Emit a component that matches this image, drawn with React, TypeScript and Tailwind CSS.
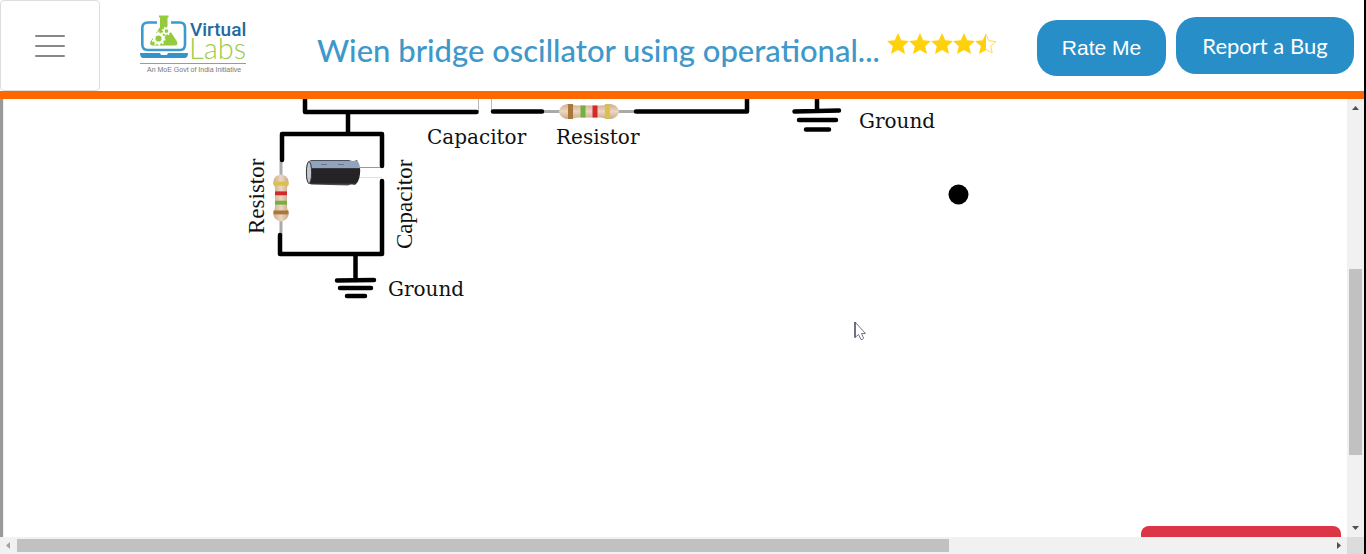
import React from "react";

function Logo() {
  return (
    <svg viewBox="138 12 112 64" className="h-16 w-28" role="img" aria-label="Virtual Labs">
      <path
        d="M157 22.5H148Q142.300 22.500 142.300 28V44.500Q142.300 50 148 50H180Q185 50 185 44.500V28Q185 22.500 180 22.500H171"
        fill="none"
        stroke="#3a9bce"
        strokeWidth="2.600"
      />
      <path d="M140 53H160L161 55H167L168 53H188Q188 58 184.500 58H143.500Q140 58 140 53Z" fill="#3593cb" />
      <path
        d="M159 15.500H168.500V17.500H167.500V27L177 41.500Q178.500 45.500 174.500 45.500H153Q149 45.500 150.500 41.500L160 27V17.500H159Z"
        fill="#93cb3d"
      />
      <circle cx="158.500" cy="38.500" r="4.400" fill="none" stroke="#fff" strokeWidth="2.600" />
      <circle cx="158.500" cy="38.500" r="6.200" fill="none" stroke="#fff" strokeWidth="1.600" strokeDasharray="2 1.900" />
      <circle cx="166.500" cy="31" r="2.700" fill="none" stroke="#fff" strokeWidth="1.700" />
      <circle cx="166.500" cy="31" r="3.900" fill="none" stroke="#fff" strokeWidth="1.200" strokeDasharray="1.500 1.560" />
      <text x="190" y="36" fontSize="19" className="fill-[#23699f] font-['Roboto',sans-serif] font-medium">
        Virtual
      </text>
      <text x="189" y="59" fontSize="29" className="fill-[#9ccc4c] font-['Lato',sans-serif] font-light">
        Labs
      </text>
      <path d="M140 63.500H246" stroke="#9a9a9a" />
      <text x="147" y="72" fontSize="7" className="fill-[#777] font-['Liberation_Sans',sans-serif]">
        An MoE Govt of India Initiative
      </text>
    </svg>
  );
}

const STAR = "M11 0L14.200 7.200L22 8.100L16.200 13.300L18 21L11 17L4 21L5.800 13.300L0 8.100L7.800 7.200Z";

function Star({ half = false }: { half?: boolean }) {
  return (
    <svg viewBox="0 0 22 22" className="size-[22px]" aria-hidden="true">
      {half ? (
        <>
          <path d="M11 0V17L4 21L5.800 13.300L0 8.100L7.800 7.200Z" fill="#ffd10a" />
          <path d="M11 1.500L13.800 7.700L21 8.500L15.600 13.200L17.200 20L11 16.400" fill="none" stroke="#ffd95a" />
        </>
      ) : (
        <path d={STAR} fill="#ffd10a" />
      )}
    </svg>
  );
}

/* Resistor body drawn along the x axis, centred on the origin. */
function ResistorShape({ transform }: { transform: string }) {
  return (
    <g transform={transform}>
      <path d="M-48 0H48" stroke="#aaa" strokeWidth="3" />
      <path
        d="M-30 0C-29 -6 -24 -8 -18 -7.500Q-15 -6 -11 -6H11Q15 -6 18 -7.500C24 -8 29 -6 30 0C29 6 24 8 18 7.500Q15 6 11 6H-11Q-15 6 -18 7.500C-24 8 -29 6 -30 0Z"
        fill="url(#ceramic)"
      />
      <path d="M-18.500 -7.500V7.500" stroke="#a87838" strokeWidth="5" />
      <path d="M-6 -6V6" stroke="#73b13e" strokeWidth="5" />
      <path d="M6 -6V6" stroke="#d4282f" strokeWidth="5" />
      <path d="M18.500 -7.500V7.500" stroke="#d8c24b" strokeWidth="5" />
    </g>
  );
}

function Circuit() {
  return (
    <svg viewBox="4 99 996 220" className="h-[220px] w-[996px] shrink-0" role="img" aria-label="Circuit diagram">
      <defs>
        <linearGradient id="ceramic" x1="0" y1="0" x2="0" y2="1">
          <stop offset="0" stopColor="#cfae91" />
          <stop offset="0.500" stopColor="#ecd6c1" />
          <stop offset="1" stopColor="#cbaa8d" />
        </linearGradient>
        <linearGradient id="can" x1="0" y1="0" x2="0" y2="1">
          <stop offset="0" stopColor="#2b2b30" />
          <stop offset="0.060" stopColor="#91a4bd" />
          <stop offset="0.300" stopColor="#91a4bd" />
          <stop offset="0.340" stopColor="#252326" />
          <stop offset="0.900" stopColor="#252326" />
          <stop offset="1" stopColor="#626269" />
        </linearGradient>
      </defs>
      <path d="M478.500 96V112M491.500 96V111" stroke="#bbb" fill="none" />
      <ResistorShape transform="translate(589 111.500)" />
      <ResistorShape transform="translate(281 198) rotate(-90) scale(0.780 1)" />
      <g fill="none" stroke="#000" strokeWidth="4.500" strokeLinecap="round" strokeLinejoin="round">
        <path d="M305 96V112H476.500" />
        <path d="M493 111.500H542M636 111.500H747V96" />
        <path d="M348 113V133M282 160V134H382V166" />
        <path d="M280 235V254H382V181M355.500 255V280" />
        <path d="M337 280.500L374 280M340 288H371M347 296H365" />
        <path d="M817 96V110M794.500 111.500L839 110.500M799 120H836M806 129.500H829" />
      </g>
      <path d="M358 167.500H380" stroke="#999" />
      <path d="M358 177.500H382" stroke="#e0e0e0" />
      <path
        d="M311 160H349Q353 162 357 160Q361 165 360 174Q359 182 355 185Q351 184 348 185.500L311 184.500Q306 183 306 172.500Q306 161 311 160Z"
        fill="url(#can)"
      />
      <ellipse cx="309" cy="172.500" rx="2.600" ry="11" fill="#c1c5cf" stroke="#333" />
      <path d="M321 164.500H327M338 164.500H344" stroke="#647590" />
      <circle cx="958.500" cy="194.500" r="10" />
      <g className="fill-[#111] font-['DejaVu_Serif',serif]" fontSize="20">
        <text x="427" y="144">Capacitor</text>
        <text x="556" y="144">Resistor</text>
        <text x="859" y="128">Ground</text>
        <text x="388" y="296">Ground</text>
      </g>
      <g className="fill-[#111] font-['Liberation_Serif',serif]" fontSize="23">
        <text transform="translate(264 234) rotate(-90)">Resistor</text>
        <text transform="translate(412 249) rotate(-90)">Capacitor</text>
      </g>
    </svg>
  );
}

function ScrollArrow({ label, d, color }: { label: string; d: string; color: string }) {
  return (
    <button type="button" aria-label={label} className="flex size-[17px] shrink-0 items-center justify-center">
      <svg viewBox="0 0 17 17" className="size-[17px]">
        <path d={d} fill={color} />
      </svg>
    </button>
  );
}

export default function App() {
  return (
    <div className="flex h-screen flex-col overflow-hidden border-r-2 border-black bg-white">
      <header className="flex h-[99px] shrink-0 items-start border-b-8 border-[#ff6700]">
        <button
          type="button"
          aria-label="Open menu"
          className="flex h-[91px] w-[100px] shrink-0 flex-col items-center justify-center gap-2 rounded border border-[#ddd]"
        >
          <span className="h-0.5 w-[30px] rounded bg-[#888]" />
          <span className="h-0.5 w-[30px] rounded bg-[#888]" />
          <span className="h-0.5 w-[30px] rounded bg-[#888]" />
        </button>
        <a href="#home" className="ml-[38px] mt-3 shrink-0">
          <Logo />
        </a>
        <h1 className="ml-[67px] mt-7 min-w-0 whitespace-nowrap font-['Lato',sans-serif] text-[31px] font-medium leading-[44px] text-[#3e98c9]">
          Wien bridge oscillator using operational...
        </h1>
        <div className="ml-auto flex shrink-0 items-start">
          <div role="img" aria-label="4.5 out of 5 stars" className="mr-10 mt-[33px] flex">
            <Star />
            <Star />
            <Star />
            <Star />
            <Star half />
          </div>
          <button
            type="button"
            className="mr-2.5 mt-5 h-14 w-[129px] rounded-[20px] bg-[#288ec8] font-['Liberation_Sans',sans-serif] text-[21px] text-white"
          >
            Rate Me
          </button>
          <button
            type="button"
            className="mr-2.5 mt-[17px] h-[57px] w-[178px] rounded-[20px] bg-[#288ec8] font-['Lato',sans-serif] text-[22px] text-white"
          >
            Report a Bug
          </button>
        </div>
      </header>

      <div className="flex min-h-0 flex-1">
        <main className="relative flex min-w-0 flex-1 flex-col overflow-hidden border-l-[3px] border-[#999]">
          <div className="flex min-h-0 flex-1 flex-col border-l border-[#eee]">
            <Circuit />
            <button
              type="button"
              aria-label="Submit"
              className="mr-1.5 mt-auto h-[11px] w-[200px] shrink-0 self-end rounded-t-lg bg-[#dc3545]"
            />
          </div>
          <svg viewBox="0 0 12 20" className="absolute left-[851px] top-[222px] h-5 w-3" aria-hidden="true">
            <path
              d="M1 1V16.500L4.500 13.500L7 18.500Q9 19 9.500 17L7.500 12.500H11.500Z"
              fill="#fff"
              stroke="#73778c"
            />
            <path d="M1 1V16.500" stroke="#262640" />
          </svg>
        </main>
        <div className="flex w-[17px] shrink-0 flex-col bg-[#f1f1f1]">
          <ScrollArrow label="Scroll up" d="M5 11L8.500 7L12 11Z" color="#505050" />
          <div className="flex flex-1 flex-col px-0.5">
            <div className="flex-[153]" />
            <div className="flex-[186] bg-[#c1c1c1]" />
            <div className="flex-[65]" />
          </div>
          <ScrollArrow label="Scroll down" d="M5 6L8.500 10L12 6Z" color="#505050" />
        </div>
      </div>

      <div className="flex h-[17px] shrink-0 bg-[#f1f1f1]">
        <ScrollArrow label="Scroll left" d="M10 5L6 8.500L10 12Z" color="#a3a3a3" />
        <div className="flex flex-1 py-0.5">
          <div className="flex-[932] bg-[#c1c1c1]" />
          <div className="flex-[381]" />
        </div>
        <ScrollArrow label="Scroll right" d="M7 5L11 8.500L7 12Z" color="#505050" />
        <div className="w-[17px] bg-[#dcdcdc]" />
      </div>
    </div>
  );
}
